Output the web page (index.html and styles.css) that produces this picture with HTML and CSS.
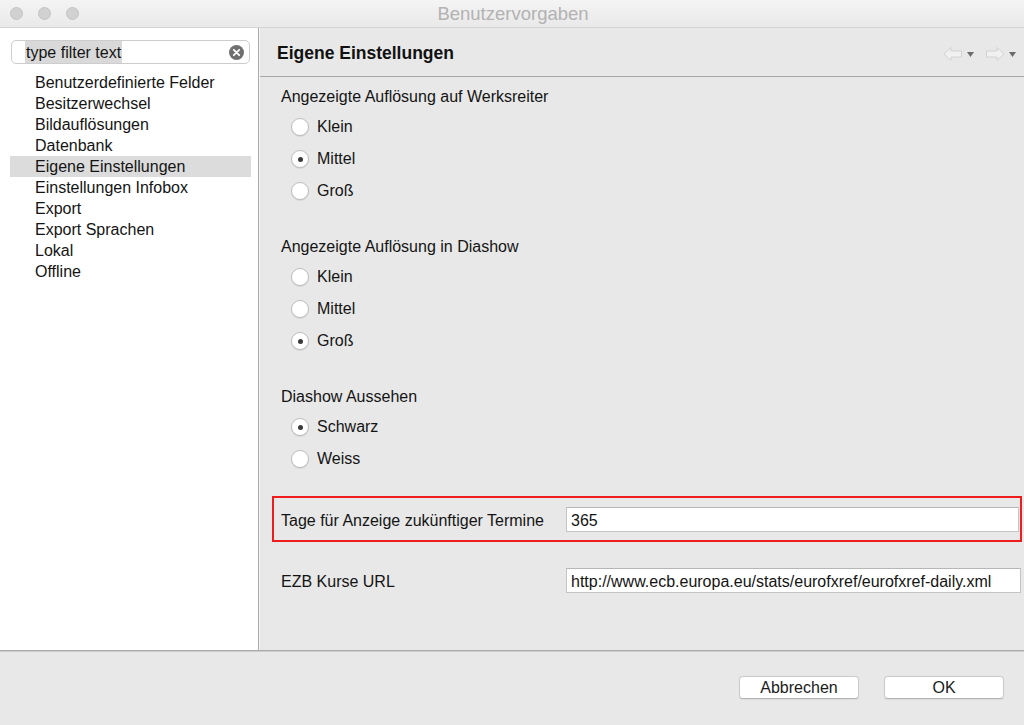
FILE: index.html
```html
<!DOCTYPE html>
<html lang="de">
<head>
<meta charset="utf-8">
<title>Benutzervorgaben</title>
<link rel="stylesheet" href="styles.css">
</head>
<body>
<div class="window">
  <div class="titlebar">
    <div class="lights">
      <span class="light"></span><span class="light"></span><span class="light"></span>
    </div>
    <div class="title">Benutzervorgaben</div>
  </div>
  <div class="main">
    <aside class="sidebar">
      <div class="search">
        <span class="search-text">type filter text</span>
        <span class="clear">
          <svg width="15" height="15" viewBox="0 0 15 15"><circle cx="7.5" cy="7.5" r="7.5" fill="#6f6f6f"/><path d="M4.8 4.8 L10.2 10.2 M10.2 4.8 L4.8 10.2" stroke="#fff" stroke-width="1.8" stroke-linecap="round"/></svg>
        </span>
      </div>
      <ul class="tree">
        <li>Benutzerdefinierte Felder</li>
        <li>Besitzerwechsel</li>
        <li>Bildauflösungen</li>
        <li>Datenbank</li>
        <li class="selected">Eigene Einstellungen</li>
        <li>Einstellungen Infobox</li>
        <li>Export</li>
        <li>Export Sprachen</li>
        <li>Lokal</li>
        <li>Offline</li>
      </ul>
    </aside>
    <section class="content">
      <div class="header">
        <h1 class="header-title">Eigene Einstellungen</h1>
        <div class="nav">
          <svg class="arrow" width="20" height="16" viewBox="0 0 20 16"><path d="M1 8 L8 1.5 L8 5 L18.5 5 L18.5 11 L8 11 L8 14.5 Z" fill="#f1f1f1" stroke="#d2d2d2" stroke-width="1" stroke-linejoin="round"/></svg>
          <svg class="caret" width="7" height="5" viewBox="0 0 7 5"><path d="M0 0 L7 0 L3.5 5 Z" fill="#6b6b6b"/></svg>
          <svg class="arrow next" width="20" height="16" viewBox="0 0 20 16"><path d="M19 8 L12 1.5 L12 5 L1.5 5 L1.5 11 L12 11 L12 14.5 Z" fill="#f1f1f1" stroke="#d2d2d2" stroke-width="1" stroke-linejoin="round"/></svg>
          <svg class="caret" width="7" height="5" viewBox="0 0 7 5"><path d="M0 0 L7 0 L3.5 5 Z" fill="#6b6b6b"/></svg>
        </div>
      </div>
      <div class="body">
        <div class="group">
          <div class="group-title">Angezeigte Auflösung auf Werksreiter</div>
          <div class="radios">
            <div class="radio"><span class="dot"></span>Klein</div>
            <div class="radio checked"><span class="dot"></span>Mittel</div>
            <div class="radio"><span class="dot"></span>Groß</div>
          </div>
        </div>
        <div class="group">
          <div class="group-title">Angezeigte Auflösung in Diashow</div>
          <div class="radios">
            <div class="radio"><span class="dot"></span>Klein</div>
            <div class="radio"><span class="dot"></span>Mittel</div>
            <div class="radio checked"><span class="dot"></span>Groß</div>
          </div>
        </div>
        <div class="group">
          <div class="group-title">Diashow Aussehen</div>
          <div class="radios">
            <div class="radio checked"><span class="dot"></span>Schwarz</div>
            <div class="radio"><span class="dot"></span>Weiss</div>
          </div>
        </div>
        <div class="field highlight">
          <span class="field-label">Tage für Anzeige zukünftiger Termine</span>
          <span class="input">365</span>
        </div>
        <div class="field url-field">
          <span class="field-label">EZB Kurse URL</span>
          <span class="input wide">http://www.ecb.europa.eu/stats/eurofxref/eurofxref-daily.xml</span>
        </div>
      </div>
    </section>
  </div>
  <div class="footer">
    <button class="btn">Abbrechen</button>
    <button class="btn">OK</button>
  </div>
</div>
</body>
</html>
```
FILE: styles.css
```css
* { box-sizing: border-box; }
html, body { margin: 0; padding: 0; }
body {
  font-family: "Liberation Sans", Arial, sans-serif;
  font-size: 16px;
  color: #141414;
  background: #e8e8e8;
}
.window {
  width: 1024px;
  height: 725px;
  display: flex;
  flex-direction: column;
  overflow: hidden;
}
.titlebar {
  height: 28px;
  flex: none;
  display: flex;
  align-items: center;
  justify-content: center;
  position: relative;
  background: linear-gradient(#f4f4f4, #e9e9e9);
  border-bottom: 1px solid #d4d4d4;
}
.lights {
  position: absolute;
  left: 10px;
  top: 7px;
  display: flex;
  gap: 15px;
}
.light {
  width: 13px;
  height: 13px;
  border-radius: 50%;
  background: #d1d1d1;
  border: 1px solid #c4c4c4;
}
.title {
  font-size: 18.5px;
  color: #b2b2b2;
  margin-left: 2px;
}
.main {
  flex: 1;
  display: flex;
  border-bottom: 1px solid #aaaaaa;
}
.sidebar {
  width: 259px;
  flex: none;
  background: #ffffff;
  border-right: 1px solid #a9a9a9;
  padding-top: 12px;
}
.search {
  margin: 0 8px 0 11px;
  height: 24px;
  border: 1px solid #cdcdcd;
  border-radius: 5px;
  display: flex;
  align-items: center;
  padding-left: 13px;
  padding-right: 5px;
  background: #fff;
}
.search-text {
  background: #d9d9d9;
  padding: 2px 1px 0;
  line-height: 20px;
  flex: none;
}
.clear {
  margin-left: auto;
  display: flex;
}
.tree {
  list-style: none;
  margin: 8px 0 0 10px;
  padding: 0;
  width: 241px;
}
.tree li {
  height: 21px;
  line-height: 21px;
  padding-left: 25px;
}
.tree li.selected {
  background: #dcdcdc;
}
.content {
  flex: 1;
  background: #e8e8e8;
  border-left: 1px solid #f6f6f6;
  display: flex;
  flex-direction: column;
}
.header {
  height: 49px;
  flex: none;
  display: flex;
  align-items: center;
  padding-left: 17px;
  padding-right: 8px;
  padding-top: 3px;
  border-bottom: 1px solid #a7a7a7;
}
.header-title {
  margin: 0;
  font-size: 17.5px;
  font-weight: bold;
  color: #111;
}
.nav {
  margin-left: auto;
  display: flex;
  align-items: center;
  margin-top: 0;
}
.caret { margin-left: 4px; margin-top: 2px; }
.arrow.next { margin-left: 11px; }
.body {
  padding-top: 9px;
}
.group + .group { margin-top: 29px; }
.group-title {
  line-height: 22px;
  padding-left: 21px;
}
.radios {
  margin-top: 3px;
  padding-left: 31px;
}
.radio {
  height: 32px;
  display: flex;
  align-items: center;
}
.dot {
  width: 18px;
  height: 18px;
  border-radius: 50%;
  background: #fff;
  border: 1px solid #bdbdbd;
  box-shadow: 0 1px 1px rgba(0,0,0,0.08);
  margin-right: 8px;
  display: flex;
  align-items: center;
  justify-content: center;
}
.radio.checked .dot::after {
  content: "";
  width: 5px;
  height: 5px;
  border-radius: 50%;
  background: #3a3a3a;
}
.field {
  margin: 21px 2px 0 12px;
  height: 46px;
  border: 2px solid transparent;
  padding-left: 7px;
  padding-right: 1px;
  display: flex;
  align-items: center;
}
.field.highlight {
  border-color: #ee1c1c;
}
.field.url-field {
  margin-top: 15px;
  padding-right: 0;
  margin-right: 1px;
}
.field-label {
  width: 285px;
  flex: none;
  padding-top: 3px;
}
.input {
  flex: 1;
  height: 25px;
  background: #fff;
  border: 1px solid #c4c4c4;
  border-top-color: #b6b6b6;
  padding-left: 4px;
  padding-top: 1px;
  line-height: 23px;
  white-space: nowrap;
  overflow: hidden;
}
.footer {
  flex: none;
  height: 74px;
  border-top: 1px solid #cdcdcd;
  display: flex;
  justify-content: flex-end;
  align-items: flex-start;
  padding-top: 24px;
  padding-right: 20px;
  gap: 25px;
}
.btn {
  width: 120px;
  height: 23px;
  background: #fff;
  border: 1px solid #cacaca;
  border-bottom-color: #b3b3b3;
  border-radius: 4px;
  font-family: "Liberation Sans", Arial, sans-serif;
  font-size: 16px;
  color: #1b1b1b;
  padding: 1px 0 0;
  box-shadow: 0 1px 1px rgba(0,0,0,0.06);
}
```
